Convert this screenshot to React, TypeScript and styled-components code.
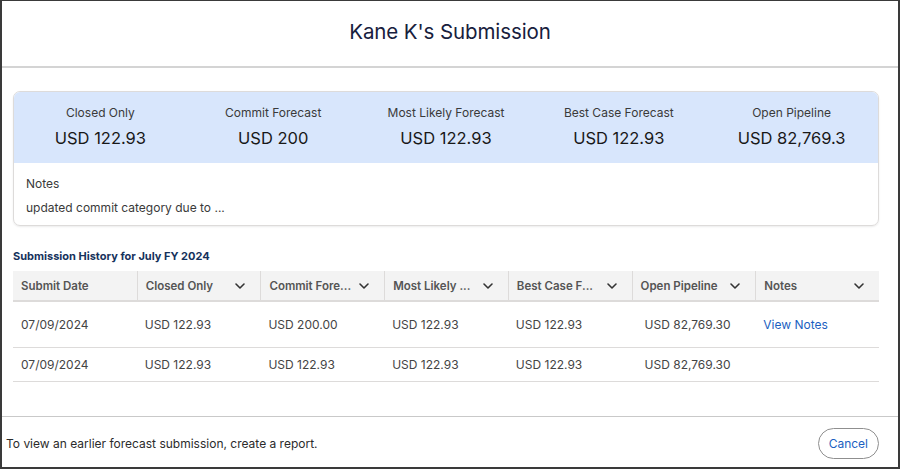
import styled, { createGlobalStyle } from "styled-components";

const GlobalStyle = createGlobalStyle`
  * { box-sizing: border-box; }
  html, body { margin: 0; padding: 0; }
  body {
    font-family: Inter, "Liberation Sans", Arial, sans-serif;
    background: #3a3a3a;
  }
`;

type Summary = { label: string; value: string };

const summary: Summary[] = [
  { label: "Closed Only", value: "USD 122.93" },
  { label: "Commit Forecast", value: "USD 200" },
  { label: "Most Likely Forecast", value: "USD 122.93" },
  { label: "Best Case Forecast", value: "USD 122.93" },
  { label: "Open Pipeline", value: "USD 82,769.3" },
];

const columns = [
  { title: "Submit Date", sortable: false },
  { title: "Closed Only", sortable: true },
  { title: "Commit Fore...", sortable: true },
  { title: "Most Likely ...", sortable: true },
  { title: "Best Case F...", sortable: true },
  { title: "Open Pipeline", sortable: true },
  { title: "Notes", sortable: true },
];

const rows = [
  {
    cells: ["07/09/2024", "USD 122.93", "USD 200.00", "USD 122.93", "USD 122.93", "USD 82,769.30"],
    notes: true,
    tall: true,
  },
  {
    cells: ["07/09/2024", "USD 122.93", "USD 122.93", "USD 122.93", "USD 122.93", "USD 82,769.30"],
    notes: false,
    tall: false,
  },
];

function Chevron() {
  return (
    <svg width="12" height="12" viewBox="0 0 12 12" fill="none">
      <path d="M2 4l4 4 4-4" stroke="#333" strokeWidth="1.6" strokeLinecap="round" strokeLinejoin="round" />
    </svg>
  );
}

function App() {
  return (
    <>
      <GlobalStyle />
      <Modal>
        <Header>
          <Title>Kane K's Submission</Title>
        </Header>
        <Body>
          <SummaryCard>
            <SummaryGrid>
              {summary.map((s) => (
                <SummaryItem key={s.label}>
                  <SummaryLabel>{s.label}</SummaryLabel>
                  <SummaryValue>{s.value}</SummaryValue>
                </SummaryItem>
              ))}
            </SummaryGrid>
            <NotesBlock>
              <NotesLabel>Notes</NotesLabel>
              <NotesText>updated commit category due to ...</NotesText>
            </NotesBlock>
          </SummaryCard>

          <SectionTitle>Submission History for July FY 2024</SectionTitle>
          <Table>
            <HeadRow>
              {columns.map((c, i) => (
                <HeadCell key={c.title} $first={i === 0}>
                  <span>{c.title}</span>
                  {c.sortable && <Chevron />}
                </HeadCell>
              ))}
            </HeadRow>
            {rows.map((r, ri) => (
              <DataRow key={ri} $tall={r.tall}>
                {r.cells.map((cell, ci) => (
                  <DataCell key={ci} $nudge={ci === 5}>
                    {cell}
                  </DataCell>
                ))}
                <DataCell>{r.notes && <NotesLink>View Notes</NotesLink>}</DataCell>
              </DataRow>
            ))}
          </Table>
        </Body>
        <Footer>
          <FooterText>To view an earlier forecast submission, create a report.</FooterText>
          <CancelButton>Cancel</CancelButton>
        </Footer>
      </Modal>
    </>
  );
}

const Modal = styled.div`
  width: 900px;
  height: 469px;
  background: #fff;
  border: 2px solid #3a3a3a;
  border-top-width: 1px;
  display: flex;
  flex-direction: column;
  overflow: hidden;
`;

const Header = styled.div`
  height: 67px;
  flex-shrink: 0;
  display: flex;
  align-items: center;
  justify-content: center;
  padding-bottom: 4px;
  border-bottom: 2px solid #d4d4d4;
`;

const Title = styled.h1`
  margin: 0;
  font-size: 20.5px;
  font-weight: 400;
  color: #17203d;
  letter-spacing: -0.1px;
`;

const Body = styled.div`
  flex: 1;
  padding: 23px 19px 0 11px;
  display: flex;
  flex-direction: column;
  border-bottom: 1px solid #c9c9c9;
`;

const SummaryCard = styled.div`
  border: 1px solid #dddbda;
  border-radius: 7px;
  overflow: hidden;
  height: 135px;
  box-shadow: 0 1px 2px rgba(0, 0, 0, 0.08);
`;

const SummaryGrid = styled.div`
  display: grid;
  grid-template-columns: repeat(5, 1fr);
  background: #d8e6fc;
  height: 71px;
  padding-top: 13px;
`;

const SummaryItem = styled.div`
  display: flex;
  flex-direction: column;
  align-items: center;
  gap: 8px;
`;

const SummaryLabel = styled.div`
  font-size: 12px;
  color: #3a3a3a;
`;

const SummaryValue = styled.div`
  font-size: 16.5px;
  color: #181818;
`;

const NotesBlock = styled.div`
  padding: 13px 12px 0;
  display: flex;
  flex-direction: column;
  gap: 9px;
`;

const NotesLabel = styled.div`
  font-size: 12px;
  color: #3a3a3a;
`;

const NotesText = styled.div`
  font-size: 12px;
  color: #3a3a3a;
`;

const SectionTitle = styled.h2`
  margin: 23px 0 8px;
  font-size: 11px;
  font-weight: 700;
  color: #16325c;
`;

const Table = styled.div`
  display: flex;
  flex-direction: column;
`;

const HeadRow = styled.div`
  display: grid;
  grid-template-columns: repeat(7, 1fr);
  height: 31px;
  background: #f3f3f3;
  border-bottom: 2px solid #dddbda;
`;

const HeadCell = styled.div<{ $first?: boolean }>`
  display: flex;
  align-items: center;
  justify-content: space-between;
  gap: 6px;
  padding: 0 14px 0 8px;
  font-size: 11.5px;
  font-weight: 600;
  color: #555;
  border-left: ${(p) => (p.$first ? "none" : "1px solid #dddbda")};
  white-space: nowrap;
`;

const DataRow = styled.div<{ $tall?: boolean }>`
  display: grid;
  grid-template-columns: repeat(7, 1fr);
  height: ${(p) => (p.$tall ? "46px" : "34px")};
  border-bottom: 1px solid #dddbda;
  align-items: center;
`;

const DataCell = styled.div<{ $nudge?: boolean }>`
  padding-left: ${(p) => (p.$nudge ? "13px" : "8px")};
  font-size: 12px;
  color: #444;
  white-space: nowrap;
`;

const NotesLink = styled.a`
  color: #1b5fc1;
  cursor: pointer;
`;

const Footer = styled.div`
  height: 50px;
  flex-shrink: 0;
  display: flex;
  align-items: center;
  justify-content: space-between;
  padding: 3px 19px 0 4px;
`;

const FooterText = styled.div`
  font-size: 12px;
  color: #2b2b2b;
`;

const CancelButton = styled.button`
  height: 31px;
  padding: 0 10px;
  border: 1px solid #8f8f8f;
  border-radius: 16px;
  background: #fff;
  color: #1b5fc1;
  font-family: inherit;
  font-size: 12px;
`;

export default App;
